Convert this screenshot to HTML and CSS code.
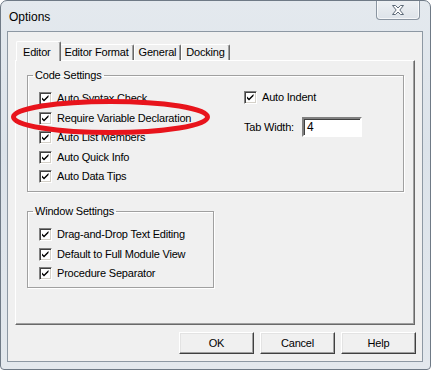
FILE: index.html
```html
<!DOCTYPE html>
<html lang="en">
<head>
    <meta charset="UTF-8" />
    <title>Options</title>
    <link rel="stylesheet" href="styles.css">
</head>
<body>
    <div class="window">
        <div class="titlebar">
            <span class="title">Options</span>
            <div class="close">
                <svg width="12" height="10" viewBox="0 0 12 10">
                    <polygon points="0.5,0.5 3.5,0.5 6,3 8.5,0.5 11.5,0.5 7.8,5 11.5,9.5 8.5,9.5 6,7 3.5,9.5 0.5,9.5 4.2,5" fill="#fdfdfd" stroke="#5d6a78" stroke-width="1" stroke-linejoin="round"/>
                </svg>
            </div>
        </div>

        <div class="client">
            <div class="tabs">
                <div class="tab active">Editor</div>
                <div class="tab">Editor Format</div>
                <div class="tab">General</div>
                <div class="tab">Docking</div>
            </div>

            <div class="page">
                <fieldset class="group code-group">
                    <legend>Code Settings</legend>
                    <div class="cols">
                        <div class="col">
                            <div class="check"><span class="box"></span>Auto Syntax Check</div>
                            <div class="check"><span class="box"></span>Require Variable Declaration</div>
                            <div class="check"><span class="box"></span>Auto List Members</div>
                            <div class="check"><span class="box"></span>Auto Quick Info</div>
                            <div class="check"><span class="box"></span>Auto Data Tips</div>
                        </div>
                        <div class="col side">
                            <div class="check"><span class="box"></span>Auto Indent</div>
                            <div class="field">
                                <span>Tab Width:</span>
                                <div class="input">4</div>
                            </div>
                        </div>
                    </div>
                </fieldset>

                <fieldset class="group window-group">
                    <legend>Window Settings</legend>
                    <div class="col">
                        <div class="check"><span class="box"></span>Drag-and-Drop Text Editing</div>
                        <div class="check"><span class="box"></span>Default to Full Module View</div>
                        <div class="check"><span class="box"></span>Procedure Separator</div>
                    </div>
                </fieldset>
            </div>

            <div class="buttons">
                <button>OK</button>
                <button>Cancel</button>
                <button>Help</button>
            </div>
        </div>

        <svg class="highlight" width="431" height="370" viewBox="0 0 431 370">
            <ellipse cx="110.5" cy="117" rx="97" ry="15.5" fill="none" stroke="#e8141c" stroke-width="5"/>
        </svg>
    </div>
</body>
</html>
```

FILE: styles.css
```css
* {
    margin: 0;
    padding: 0;
    box-sizing: border-box;
}

body {
    margin: 0;
    background-color: #fff;
    font-family: "Liberation Sans", Arial, sans-serif;
    font-size: 11px;
    letter-spacing: -0.2px;
    color: #000;
}

.window {
    position: relative;
    width: 431px;
    height: 370px;
    border: 1px solid #6f7a86;
    border-radius: 7px 7px 4px 4px;
    background: linear-gradient(to bottom, #e4e9ee 0%, #dce3ea 40%, #e3e8ed 100%);
    padding: 0 7px 7px 6px;
    overflow: hidden;
}

.titlebar {
    height: 30px;
    display: flex;
    align-items: flex-start;
    justify-content: space-between;
}

.title {
    font-size: 12px;
    letter-spacing: 0;
    margin: 9px 0 0 2px;
    color: #000;
}

.close {
    width: 44px;
    height: 20px;
    margin: -1px 3px 0 0;
    border: 1px solid #8a95a1;
    border-top: none;
    border-radius: 0 0 4px 4px;
    background: linear-gradient(to bottom, #eef1f4, #dde3e9);
    box-shadow: inset 0 0 0 1px rgba(255, 255, 255, 0.7);
    display: flex;
    align-items: center;
    justify-content: center;
}

.close svg {
    display: block;
    margin-top: 1px;
}

.client {
    height: 331px;
    border: 1px solid #8d98a3;
    background-color: #f0f0f0;
    display: flex;
    flex-direction: column;
}

.tabs {
    display: flex;
    align-items: flex-end;
    height: 28px;
    padding-left: 8px;
}

.tab {
    height: 16px;
    padding: 0 4px;
    line-height: 15px;
    border: 1px solid #fff;
    border-right-color: #696969;
    border-bottom: none;
    border-radius: 2px 2px 0 0;
    box-shadow: inset -1px 0 0 #a0a0a0;
    background-color: #f0f0f0;
}

.tab.active {
    height: 20px;
    padding: 0 9px 0 6px;
    line-height: 21px;
    position: relative;
    top: 1px;
    z-index: 1;
    margin-right: -1px;
}

.page {
    height: 265px;
    margin-left: 7px;
    width: 400px;
    border: 1px solid #fff;
    border-right-color: #696969;
    border-bottom-color: #696969;
    box-shadow: inset -1px -1px 0 #a0a0a0;
    padding: 8px 10px 0 11px;
}

.group {
    border: 1px solid #a0a0a0;
    box-shadow: 1px 1px 0 #fff, inset 1px 1px 0 #fff;
    padding: 0 0 0 11px;
    margin: 0;
}

.group legend {
    margin-left: -6px;
    padding: 0 2px;
    line-height: 13px;
    font-size: 11px;
}

.code-group {
    height: 123px;
    padding-top: 10px;
}

.window-group {
    width: 187px;
    height: 83px;
    margin-top: 13px;
    padding-top: 10px;
}

.cols {
    display: flex;
}

.col {
    display: flex;
    flex-direction: column;
}

.code-group .col:first-child {
    width: 205px;
}

.side {
    margin-top: -1px;
}

.check {
    height: 19.5px;
    display: flex;
    align-items: flex-start;
    gap: 5px;
    line-height: 13px;
    white-space: nowrap;
}

.box {
    width: 13px;
    height: 13px;
    flex: none;
    border: 1px solid;
    border-color: #808080 #fff #fff #808080;
    box-shadow: inset 1px 1px 0 #404040, inset -1px -1px 0 #d4d0c8;
    background: #fff url("data:image/svg+xml,%3Csvg xmlns='http://www.w3.org/2000/svg' width='11' height='11'%3E%3Cpath d='M2 4.5 L4 6.5 L8.5 2 L8.5 4 L4 8.5 L2 6.5 Z' fill='%23000'/%3E%3C/svg%3E") no-repeat 0 0;
}

.field {
    display: flex;
    align-items: center;
    gap: 8px;
    margin-top: 6px;
}

.input {
    width: 60px;
    height: 20px;
    background-color: #fff;
    border: 2px solid;
    border-color: #808080 #fff #fff #808080;
    box-shadow: inset 1px 1px 0 #404040;
    padding-left: 3px;
    line-height: 16px;
    font-size: 12px;
}

.buttons {
    display: flex;
    justify-content: flex-end;
    gap: 6px;
    margin-top: 7px;
    padding-right: 6px;
}

.buttons button {
    width: 75px;
    height: 22px;
    font-family: "Liberation Sans", Arial, sans-serif;
    font-size: 11px;
    letter-spacing: -0.2px;
    color: #000;
    background-color: #f0f0f0;
    border: 1px solid;
    border-color: #fff #404040 #404040 #fff;
    box-shadow: inset -1px -1px 0 #a0a0a0, inset 1px 1px 0 #e3e3e3;
}

.highlight {
    position: absolute;
    left: -1px;
    top: -1px;
    pointer-events: none;
}
```
